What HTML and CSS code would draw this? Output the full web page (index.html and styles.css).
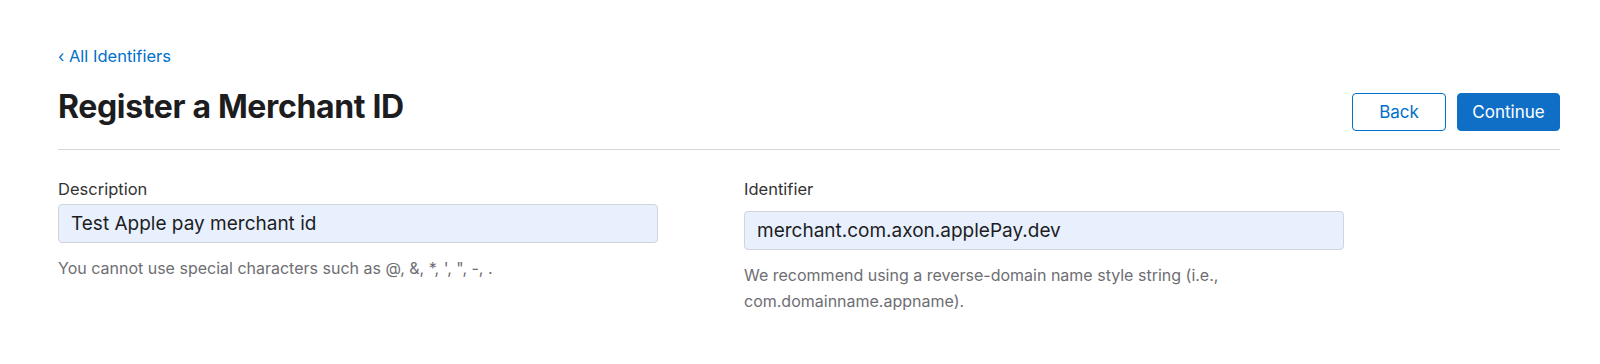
FILE: index.html
```html
<!DOCTYPE html>
<html lang="en">
<head>
    <meta charset="UTF-8">
    <meta name="viewport" content="width=device-width, initial-scale=1.0">
    <title>Register a Merchant ID</title>
    <link rel="stylesheet" href="styles.css">
</head>
<body>
    <div class="page">
        <a class="back-link" href="#">&lsaquo; All Identifiers</a>

        <div class="page-header">
            <h1>Register a Merchant ID</h1>
            <div class="actions">
                <button class="btn btn-secondary">Back</button>
                <button class="btn btn-primary">Continue</button>
            </div>
        </div>

        <div class="form-grid">
            <div class="field">
                <label for="description">Description</label>
                <input type="text" id="description" value="Test Apple pay merchant id">
                <p class="hint">You cannot use special characters such as @, &amp;, *, ', ", -, .</p>
            </div>
            <div class="field field-offset">
                <label for="identifier">Identifier</label>
                <input type="text" id="identifier" value="merchant.com.axon.applePay.dev">
                <p class="hint">We recommend using a reverse-domain name style string (i.e., com.domainname.appname).</p>
            </div>
        </div>
    </div>
</body>
</html>
```

FILE: styles.css
```css
body {
    margin: 0;
    font-family: Inter, "Liberation Sans", Arial, sans-serif;
    color: #1d1d1f;
    background: #fff;
}

.page {
    padding: 44px 40px 0 58px;
}

.back-link {
    display: inline-block;
    font-size: 16.5px;
    line-height: 24px;
    color: #0070c9;
    text-decoration: none;
}

.page-header {
    display: flex;
    justify-content: space-between;
    align-items: center;
    padding: 13px 0 18px;
    border-bottom: 1px solid #d6d6d6;
}

h1 {
    margin: 0;
    font-size: 32px;
    font-weight: 700;
    letter-spacing: -0.35px;
}

.actions {
    display: flex;
    gap: 11px;
    margin-top: 12px;
}

.btn {
    height: 38px;
    padding: 0 12px;
    font-family: inherit;
    font-size: 17px;
    border-radius: 4px;
    cursor: pointer;
}

.btn-secondary {
    width: 94px;
    background: #fff;
    color: #0070c9;
    border: 1px solid #0070c9;
}

.btn-primary {
    width: 103px;
    background: #0f6fc6;
    color: #fff;
    border: 1px solid #0f6fc6;
}

.form-grid {
    display: grid;
    grid-template-columns: 600px 600px;
    column-gap: 86px;
    padding-top: 29px;
}

.field label {
    display: block;
    font-size: 16.5px;
    line-height: 20px;
    color: #333;
    margin-bottom: 5px;
}

.field input {
    box-sizing: border-box;
    width: 100%;
    height: 39px;
    padding: 0 12px;
    font-family: inherit;
    font-size: 19px;
    color: #1d1d1f;
    background: #e8f0fe;
    border: 1px solid #d0d4da;
    border-radius: 4px;
}

.field-offset input {
    margin-top: 7px;
}

.hint {
    margin: 12px 0 0;
    font-size: 16px;
    line-height: 26px;
    color: #6e6e73;
}
```
